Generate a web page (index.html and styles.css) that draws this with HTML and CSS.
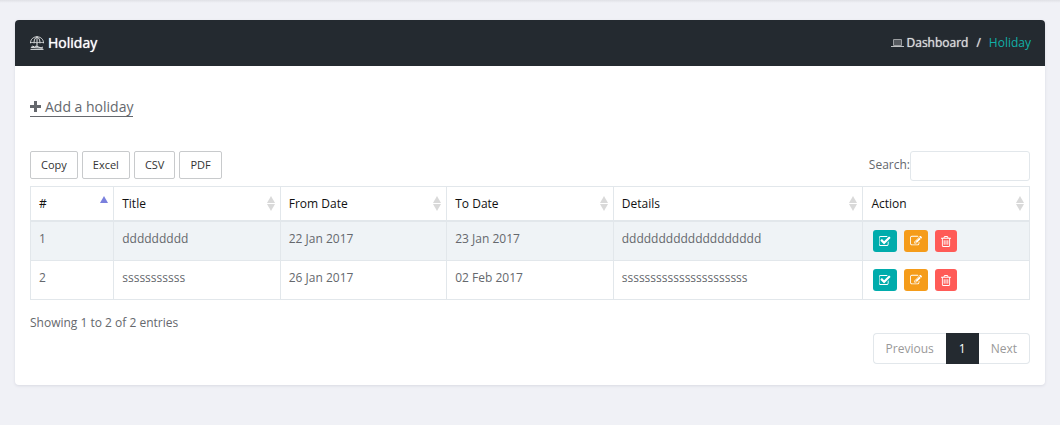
FILE: index.html
```html
<!DOCTYPE html>
<html lang="en">
<head>
<meta charset="utf-8">
<meta name="viewport" content="width=device-width, initial-scale=1">
<title>Holiday</title>
<link rel="stylesheet" href="styles.css">
</head>
<body>
<svg class="sprite" aria-hidden="true">
  <symbol id="i-check" viewBox="128 128 1664 1408"><path d="M1472 930v318q0 119-84.500 203.500t-203.500 84.500h-832q-119 0-203.500-84.500t-84.500-203.500v-832q0-119 84.500-203.500t203.500-84.500h832q63 0 117 25 15 7 18 23 3 17-9 29l-49 49q-10 10-23 10-3 0-9-2-23-6-45-6h-832q-66 0-113 47t-47 113v832q0 66 47 113t113 47h832q66 0 113-47t47-113v-254q0-13 9-22l64-64q10-10 23-10 6 0 12 3 20 8 20 29zm231-489l-814 814q-24 24-57 24t-57-24l-430-430q-24-24-24-57t24-57l110-110q24-24 57-24t57 24l263 263 647-647q24-24 57-24t57 24l110 110q24 24 24 57t-24 57z"/></symbol>
  <symbol id="i-edit" viewBox="0 0 1792 1792"><path d="M888 1184l116-116-152-152-116 116v56h96v96h56zm440-720q-16-16-33 1l-350 350q-17 17-1 33t33-1l350-350q17-17 1-33zm80 594v190q0 119-84.500 203.500t-203.500 84.500h-832q-119 0-203.500-84.500t-84.500-203.500v-832q0-119 84.500-203.500t203.500-84.500h832q63 0 117 25 15 7 18 23 3 17-9 29l-49 49q-14 14-32 8-23-6-45-6h-832q-66 0-113 47t-47 113v832q0 66 47 113t113 47h832q66 0 113-47t47-113v-126q0-13 9-22l64-64q15-15 35-7t20 29zm-96-738l288 288-672 672h-288v-288zm444 132l-92 92-288-288 92-92q28-28 68-28t68 28l152 152q28 28 28 68t-28 68z"/></symbol>
  <symbol id="i-trash" viewBox="192 128 1408 1536"><path d="M704 736v576q0 14-9 23t-23 9h-64q-14 0-23-9t-9-23v-576q0-14 9-23t23-9h64q14 0 23 9t9 23zm256 0v576q0 14-9 23t-23 9h-64q-14 0-23-9t-9-23v-576q0-14 9-23t23-9h64q14 0 23 9t9 23zm256 0v576q0 14-9 23t-23 9h-64q-14 0-23-9t-9-23v-576q0-14 9-23t23-9h64q14 0 23 9t9 23zm128 724v-948h-896v948q0 22 7 40.500t14.500 27 10.500 8.500h832q3 0 10.500-8.500t14.500-27 7-40.500zm-672-1076h448l-48-117q-7-9-17-11h-317q-10 2-17 11zm928 32v64q0 14-9 23t-23 9h-96v948q0 83-47 143.500t-113 60.500h-832q-66 0-113-58.500t-47-141.500v-952h-96q-14 0-23-9t-9-23v-64q0-14 9-23t23-9h309l70-167q15-37 54-63t79-26h320q40 0 79 26t54 63l70 167h309q14 0 23 9t9 23z"/></symbol>
</svg>
<main class="page">
  <section class="card">
    <header class="card-header">
      <h1 class="title">
        <svg class="title-icon" viewBox="0 0 14 14" aria-hidden="true"><path d="M.5 7C.5 3.200 3.400.8 7 .8S13.500 3.200 13.500 7C12.500 6.300 10.800 6.300 10 7 9 6.300 8 6.300 7 7 6 6.300 5 6.300 4 7 3.200 6.300 1.500 6.300 .5 7zM4 7C4 4 5 1.800 7 .8 9 1.800 10 4 10 7M7 .8V11M.5 13.400h13M1 12l1.500-2 2 1 1.500-1 6.500 2.500M2 11.500l9 .5 2-1"/></svg>
        Holiday
      </h1>
      <nav class="crumbs" aria-label="Breadcrumb">
        <a class="crumb" href="#dashboard">
          <svg class="crumb-icon" viewBox="0 0 13 10" aria-hidden="true"><path class="screen" d="M2.500 1.500h8v6h-8z"/><path d="M0 8.500h13"/></svg>
          Dashboard</a>
        <span class="slash">/</span>
        <span class="current">Holiday</span>
      </nav>
    </header>
    <div class="card-body">
      <a class="add" href="#add">
        <svg class="add-icon" viewBox="0 0 11 11" aria-hidden="true"><path d="M5.500 0v11M0 5.500h11"/></svg>
        Add a holiday</a>
      <div class="toolbar">
        <div class="exports">
          <button class="export" type="button">Copy</button>
          <button class="export" type="button">Excel</button>
          <button class="export" type="button">CSV</button>
          <button class="export" type="button">PDF</button>
        </div>
        <div class="search">
          <label for="search">Search:</label>
          <input class="search-box" id="search" type="search">
        </div>
      </div>
      <table class="holidays">
        <colgroup>
          <col class="c1"><col class="c2"><col class="c2"><col class="c2"><col class="c3"><col class="c2">
        </colgroup>
        <thead>
          <tr>
            <th class="sort asc" scope="col" aria-sort="ascending">#</th>
            <th class="sort" scope="col">Title</th>
            <th class="sort" scope="col">From Date</th>
            <th class="sort" scope="col">To Date</th>
            <th class="sort" scope="col">Details</th>
            <th class="sort" scope="col">Action</th>
          </tr>
        </thead>
        <tbody>
          <tr>
            <td>1</td><td>ddddddddd</td><td>22 Jan 2017</td><td>23 Jan 2017</td><td>ddddddddddddddddddd</td>
            <td><div class="actions">
              <button class="act ok" type="button" aria-label="Approve"><svg class="i-check"><use href="#i-check"/></svg></button>
              <button class="act edit" type="button" aria-label="Edit"><svg class="i-edit"><use href="#i-edit"/></svg></button>
              <button class="act del" type="button" aria-label="Delete"><svg class="i-trash"><use href="#i-trash"/></svg></button>
            </div></td>
          </tr>
          <tr>
            <td>2</td><td>sssssssssss</td><td>26 Jan 2017</td><td>02 Feb 2017</td><td>ssssssssssssssssssssss</td>
            <td><div class="actions">
              <button class="act ok" type="button" aria-label="Approve"><svg class="i-check"><use href="#i-check"/></svg></button>
              <button class="act edit" type="button" aria-label="Edit"><svg class="i-edit"><use href="#i-edit"/></svg></button>
              <button class="act del" type="button" aria-label="Delete"><svg class="i-trash"><use href="#i-trash"/></svg></button>
            </div></td>
          </tr>
        </tbody>
      </table>
      <p class="info">Showing 1 to 2 of 2 entries</p>
      <nav class="pager" aria-label="Pages">
        <a class="page-link" href="#previous">Previous</a>
        <a class="page-link active" href="#1" aria-current="page">1</a>
        <a class="page-link" href="#next">Next</a>
      </nav>
    </div>
  </section>
</main>
</body>
</html>
```

FILE: styles.css
```css
* { box-sizing: border-box; }
body {
  margin: 0;
  min-height: 100vh;
  background: linear-gradient(#e0e1e6, #f0f1f6 3px);
  color: #65686d;
  font: 12px/20px "Open Sans", sans-serif;
}
a { color: inherit; text-decoration: none; }
.sprite { display: none; }
.page { padding: 20px 15px; }
.card {
  background: #fff;
  border-radius: 4px;
  overflow: hidden;
  box-shadow: 0 1px 3px #d8dae2;
}
.card-header {
  display: flex;
  align-items: center;
  justify-content: space-between;
  height: 46px;
  padding: 0 14px 0 15px;
  background: #242a30;
}
.title {
  display: flex;
  align-items: center;
  gap: 4px;
  margin: 0;
  color: #fff;
  font-size: 14px;
  font-weight: 500;
  text-shadow: 0 0 1px #fff;
}
.title-icon { width: 14px; height: 14px; fill: none; stroke: #dcdedf; stroke-width: 1; }
.crumbs, .crumb { display: flex; align-items: center; }
.crumbs { gap: 8px; color: #d8dadb; font-weight: 500; }
.crumb, .slash { text-shadow: 0 0 1px #d8dadb; }
.crumb { gap: 3px; }
.crumb-icon { width: 13px; height: 10px; fill: none; stroke: #c0c2c4; stroke-width: 1; }
.screen { fill: #55595e; stroke: #9b9ea1; }
.current { color: #11b0a8; font-weight: 400; }
.card-body { padding: 31px 15px 21px; }
.add {
  display: inline-flex;
  align-items: center;
  gap: 4px;
  height: 20px;
  border-bottom: 1px solid #65686d;
  font-size: 14px;
}
.add-icon { width: 11px; height: 11px; stroke: currentColor; stroke-width: 3; }
.toolbar {
  display: flex;
  align-items: flex-start;
  justify-content: space-between;
  margin-top: 33px;
  margin-bottom: 5px;
}
.exports { display: flex; gap: 4px; }
.export {
  height: 28px;
  padding: 0 10px;
  border: 1px solid #c8cacc;
  border-radius: 2px;
  background: #fff;
  color: #333;
  font: inherit;
  font-size: 11px;
}
.search { display: flex; align-items: center; }
.search label { padding-bottom: 2px; }
.search-box {
  width: 120px;
  height: 30px;
  padding: 4px 8px;
  border: 1px solid #e2e7eb;
  border-radius: 3px;
  font: inherit;
}
.holidays {
  width: 100%;
  border-collapse: collapse;
  table-layout: fixed;
}
.c1 { width: 8.333%; }
.c2 { width: 16.667%; }
.c3 { width: 25%; }
.holidays th, .holidays td {
  padding: 7px 8px;
  border: 1px solid #e2e7eb;
  text-align: left;
  vertical-align: top;
}
.holidays th {
  position: relative;
  padding-bottom: 6px;
  border-bottom-width: 2px;
  color: #111;
  font-weight: 400;
}
.holidays tbody tr:nth-child(odd) { background: #eff3f6; }
.sort::before, .sort::after {
  content: "";
  position: absolute;
  right: 5px;
  border: 4px solid transparent;
}
.sort::before { top: 9px; border-top: 0; border-bottom: 7px solid #d9d9d9; }
.sort::after { top: 17px; border-bottom: 0; border-top: 7px solid #d9d9d9; }
.sort.asc::before { border-bottom-color: #7a80dd; }
.sort.asc::after { display: none; }
.actions { display: flex; gap: 7px; padding: 1px 2px; }
.act {
  display: flex;
  align-items: center;
  justify-content: center;
  width: 24px;
  height: 22px;
  padding: 0;
  border: 0;
  border-radius: 3px;
  color: #fff;
}
.act svg { height: 12px; fill: currentColor; }
.act .i-check { width: 12px; height: 10px; }
.act .i-edit { width: 12px; }
.act .i-trash { width: 10px; height: 11px; }
.ok { background: #00acac; }
.edit { background: #f59c1a; }
.del { width: 22px; background: #ff5b57; }
.info { margin: 13px 0 0; }
.pager { display: flex; justify-content: flex-end; }
.page-link {
  padding: 5px 12px 4px;
  border: 1px solid #e2e7eb;
  color: #999;
}
.page-link:first-child { border-right: 0; border-radius: 4px 0 0 4px; }
.page-link:last-child { border-left: 0; border-radius: 0 4px 4px 0; }
.page-link.active { border-color: #242a30; background: #242a30; color: #fff; }
```
